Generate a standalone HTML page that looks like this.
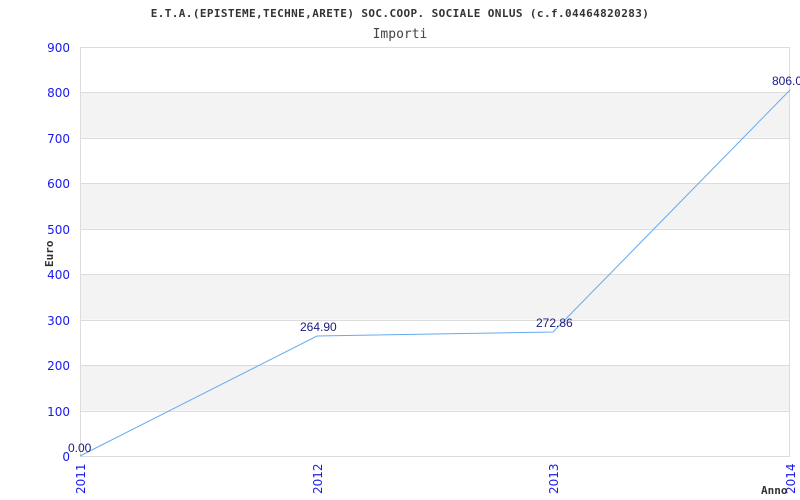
<!DOCTYPE html>
<html><head><meta charset="utf-8"><style>
html,body{margin:0;padding:0;background:#fff;width:800px;height:500px;overflow:hidden}
svg{display:block}
</style></head><body>
<svg width="800" height="500" xmlns="http://www.w3.org/2000/svg">
<rect width="800" height="500" fill="#fff"/>
<text x="400" y="17" text-anchor="middle" font-family="DejaVu Sans Mono, Liberation Mono, monospace" font-size="11" font-weight="bold" letter-spacing="0.4" fill="#333">E.T.A.(EPISTEME,TECHNE,ARETE) SOC.COOP. SOCIALE ONLUS (c.f.04464820283)</text>
<text x="400" y="38" text-anchor="middle" font-family="DejaVu Sans Mono, monospace" font-size="13" fill="#444">Importi</text>
<g fill="#f3f3f3">
<rect x="80" y="92.4" width="710" height="45.4"/>
<rect x="80" y="183.3" width="710" height="45.4"/>
<rect x="80" y="274.2" width="710" height="45.4"/>
<rect x="80" y="365.1" width="710" height="45.4"/>
</g>
<g stroke="#dcdcdc" stroke-width="1">
<line x1="80" y1="92.5" x2="790" y2="92.5"/>
<line x1="80" y1="138.5" x2="790" y2="138.5"/>
<line x1="80" y1="183.5" x2="790" y2="183.5"/>
<line x1="80" y1="229.5" x2="790" y2="229.5"/>
<line x1="80" y1="274.5" x2="790" y2="274.5"/>
<line x1="80" y1="320.5" x2="790" y2="320.5"/>
<line x1="80" y1="365.5" x2="790" y2="365.5"/>
<line x1="80" y1="411.5" x2="790" y2="411.5"/>
<rect x="80.5" y="47.5" width="709" height="409" fill="none"/>
</g>
<g font-family="DejaVu Sans, sans-serif" font-size="12" fill="#1a1aee" text-anchor="end">
<text x="70" y="52">900</text><text x="70" y="97">800</text><text x="70" y="143">700</text>
<text x="70" y="188">600</text><text x="70" y="234">500</text><text x="70" y="279">400</text>
<text x="70" y="325">300</text><text x="70" y="370">200</text><text x="70" y="416">100</text>
<text x="70" y="461">0</text>
</g>
<g font-family="DejaVu Sans, sans-serif" font-size="12" fill="#1a1aee">
<text transform="translate(85,494) rotate(-90)">2011</text>
<text transform="translate(322,494) rotate(-90)">2012</text>
<text transform="translate(558,494) rotate(-90)">2013</text>
<text transform="translate(795,494) rotate(-90)">2014</text>
</g>
<text transform="translate(53,267) rotate(-90)" font-family="DejaVu Sans Mono, monospace" font-size="11" font-weight="bold" fill="#333">Euro</text>
<text x="761" y="494" font-family="DejaVu Sans Mono, monospace" font-size="11" font-weight="bold" fill="#333">Anno</text>
<polyline points="80,456 317,336 553,332 790,90" fill="none" stroke="#66aaf0" stroke-width="1"/>
<g font-family="Liberation Sans, sans-serif" font-size="12" fill="#1a1a80">
<text x="68" y="452">0.00</text>
<text x="300" y="331">264.90</text>
<text x="536" y="327">272.86</text>
<text x="772" y="85">806.0</text>
</g>
</svg>
</body></html>
